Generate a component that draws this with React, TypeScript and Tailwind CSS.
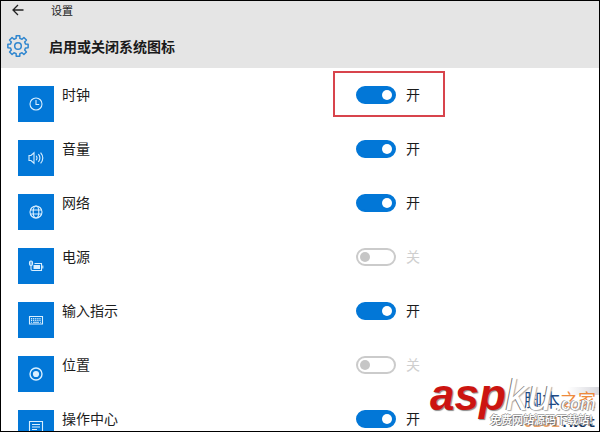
import React, { useState } from 'react';

type Item = {
  id: string;
  label: string;
  on: boolean;
  highlighted?: boolean;
  icon: React.ReactNode;
};

const items: Item[] = [
  {
    id: 'clock',
    label: '时钟',
    on: true,
    highlighted: true,
    icon: (
      <>
        <circle cx="8" cy="8" r="6" />
        <path d="M8 4v4.5h3.2" />
      </>
    ),
  },
  {
    id: 'volume',
    label: '音量',
    on: true,
    icon: (
      <>
        <path d="M1 5.5h2L6 2.8v10.4L3 10.5H1z" />
        <path d="M8.2 5.8q1.6 2.2 0 4.4M10.4 4.2q3 3.8 0 7.6M12.6 2.6q4.4 5.4 0 10.8" />
      </>
    ),
  },
  {
    id: 'network',
    label: '网络',
    on: true,
    icon: (
      <>
        <circle cx="8" cy="8" r="6" />
        <ellipse cx="8" cy="8" rx="2.8" ry="6" />
        <path d="M2.5 6h11M2.5 10h11" />
      </>
    ),
  },
  {
    id: 'power',
    label: '电源',
    on: false,
    icon: (
      <>
        <rect x="1.5" y="3" width="3" height="4.5" rx="1.4" fill="currentColor" fillOpacity="0.5" />
        <path d="M3 7.5v3.500q0 1.500 1.500 1.500h9V5.500H6.500" />
        <rect x="5.5" y="7" width="6.500" height="4" fill="currentColor" stroke="none" />
        <path d="M14.8 7.5v3" />
      </>
    ),
  },
  {
    id: 'input',
    label: '输入指示',
    on: true,
    icon: (
      <>
        <path d="M1.5 4.5h13v7.5h-13z" />
        <path d="M3 6.6h10M3 8.4h10" strokeDasharray="1.2 0.9" />
        <path d="M3 10.3h1M5 10.3h6M12 10.3h1" />
      </>
    ),
  },
  {
    id: 'location',
    label: '位置',
    on: false,
    icon: (
      <>
        <circle cx="8" cy="8" r="6" strokeWidth="1.4" />
        <circle cx="8" cy="8" r="3.1" fill="currentColor" stroke="none" />
      </>
    ),
  },
  {
    id: 'action-center',
    label: '操作中心',
    on: true,
    icon: <path d="M1.5 1.5h13v11h-5L7 15v-2.5H1.5zM4 4.5h8M4 7h8M4 9.5h5" />,
  },
];

const BackIcon = () => (
  <svg viewBox="0 0 12 12" className="size-3" fill="none" stroke="#222" strokeWidth="1.3">
    <path d="M11.5 6H1M6 1L1 6l5 5" />
  </svg>
);

// Eight teeth, four corners for each one
const gearPoints = Array.from({ length: 8 }).flatMap((_, i) => {
  const corners = [[-14, 7.8], [-10, 10.3], [10, 10.3], [14, 7.8]];
  return corners.map(([deg, r]) => {
    const a = ((i * 45 + deg) * Math.PI) / 180;
    return `${(11 + r * Math.cos(a)).toFixed(2)},${(11 + r * Math.sin(a)).toFixed(2)}`;
  });
}).join(' ');

const GearIcon = () => (
  <svg viewBox="0 0 22 22" className="size-[22px]" fill="none" stroke="#2f86cf" strokeWidth="1.5" strokeLinejoin="round">
    <polygon points={gearPoints} />
    <circle cx="11" cy="11" r="3.3" />
  </svg>
);

const SettingRow = ({ item }: { item: Item }) => {
  const [on, setOn] = useState(item.on);

  return (
    <li className="flex items-start">
      <div className="flex size-9 shrink-0 items-center justify-center bg-[#0277d7] text-[#d9efff]">
        <svg viewBox="0 0 16 16" className="size-4" fill="none" stroke="currentColor" strokeWidth="1.1">
          {item.icon}
        </svg>
      </div>
      <label htmlFor={item.id} className="ml-2 w-[294px] shrink-0 text-[14px] leading-[16px] text-[#1c1c1c]">
        {item.label}
      </label>
      <div className="relative flex items-start gap-[10px]">
        <input
          id={item.id}
          type="checkbox"
          role="switch"
          checked={on}
          onChange={() => setOn(!on)}
          className="h-[18px] w-10 appearance-none rounded-full border-2 border-[#cbcbcb] bg-white p-[2px] before:block before:size-[10px] before:rounded-full before:bg-[#c6c6c6] checked:border-[#0277d7] checked:bg-[#0277d7] checked:before:translate-x-[22px] checked:before:bg-white"
        />
        <span className={`text-[14px] leading-[16px] ${on ? 'text-[#1c1c1c]' : 'text-[#cfcfcf]'}`}>
          {on ? '开' : '关'}
        </span>
        {item.highlighted && (
          <div className="pointer-events-none absolute -top-[15px] -left-[23px] h-[46px] w-28 border-2 border-[#d8444c]" />
        )}
      </div>
    </li>
  );
};

const Watermark = () => (
  <div className="pointer-events-none absolute -right-px bottom-0 h-[88px] w-[172px] overflow-hidden whitespace-nowrap">
    <div className="absolute top-0 right-0 h-20 w-px bg-white" />
    <div className="absolute top-11 right-0 h-2 w-8 bg-linear-to-l from-[#d6d6dc] to-white" />
    <div className="absolute top-11 left-24 text-[18px] leading-[24px]">
      <span className="text-[#1d4a86]">脚本</span>
      <span className="text-[#ee8a3c]">之家</span>
    </div>
    <div className="absolute top-[72px] left-24 font-['Liberation_Mono',monospace] text-[15px] leading-[18px] font-bold">
      <span className="text-[#e9a26a]">JB51</span>
      <span className="text-[#16365f]">.Net</span>
    </div>
    <div className="absolute top-[26px] left-[2px] flex items-baseline font-['Liberation_Sans',sans-serif] text-[44px] leading-[52px] italic">
      <span className="font-bold text-[#cc1410] [text-shadow:1px_1px_1px_#8a8a8a]">asp</span>
      <span className="text-white [text-shadow:-1px_0_0_#777,1px_1px_1px_#aaa]">ku</span>
      <span className="pl-1 text-[18px] text-white [text-shadow:-1px_0_0_#888,1px_1px_1px_#999]">.com</span>
    </div>
    <div className="absolute top-[68px] left-[62px] text-[11px] leading-[16px] font-medium text-white [text-shadow:1px_1px_0_#777,-1px_0_0_#999,0_-1px_0_#aaa]">
      免费网站源码下载站!
    </div>
  </div>
);

const App: React.FC = () => {
  return (
    <div className="relative flex h-screen flex-col overflow-hidden border border-black bg-white font-['Noto_Sans_CJK_SC',sans-serif]">
      <header className="shrink-0 bg-[#e5e5e5] pb-[10px]">
        <div className="flex h-[18px] items-center">
          <button type="button" aria-label="返回" className="ml-[11px] mr-[27px]">
            <BackIcon />
          </button>
          <span className="text-[11px] leading-[16px] text-[#222]">设置</span>
        </div>
        <div className="mt-[15px] flex h-6 items-center gap-5 pl-[6px]">
          <GearIcon />
          <h1 className="text-[14px] leading-[20px] font-bold text-[#1a1a1a]">启用或关闭系统图标</h1>
        </div>
      </header>

      <main className="min-h-0 flex-1 overflow-hidden pt-[18px] pl-[17px]">
        <ul className="flex flex-col gap-[18px]">
          {items.map(item => <SettingRow key={item.id} item={item} />)}
        </ul>
      </main>

      <Watermark />
    </div>
  );
};

export default App;
